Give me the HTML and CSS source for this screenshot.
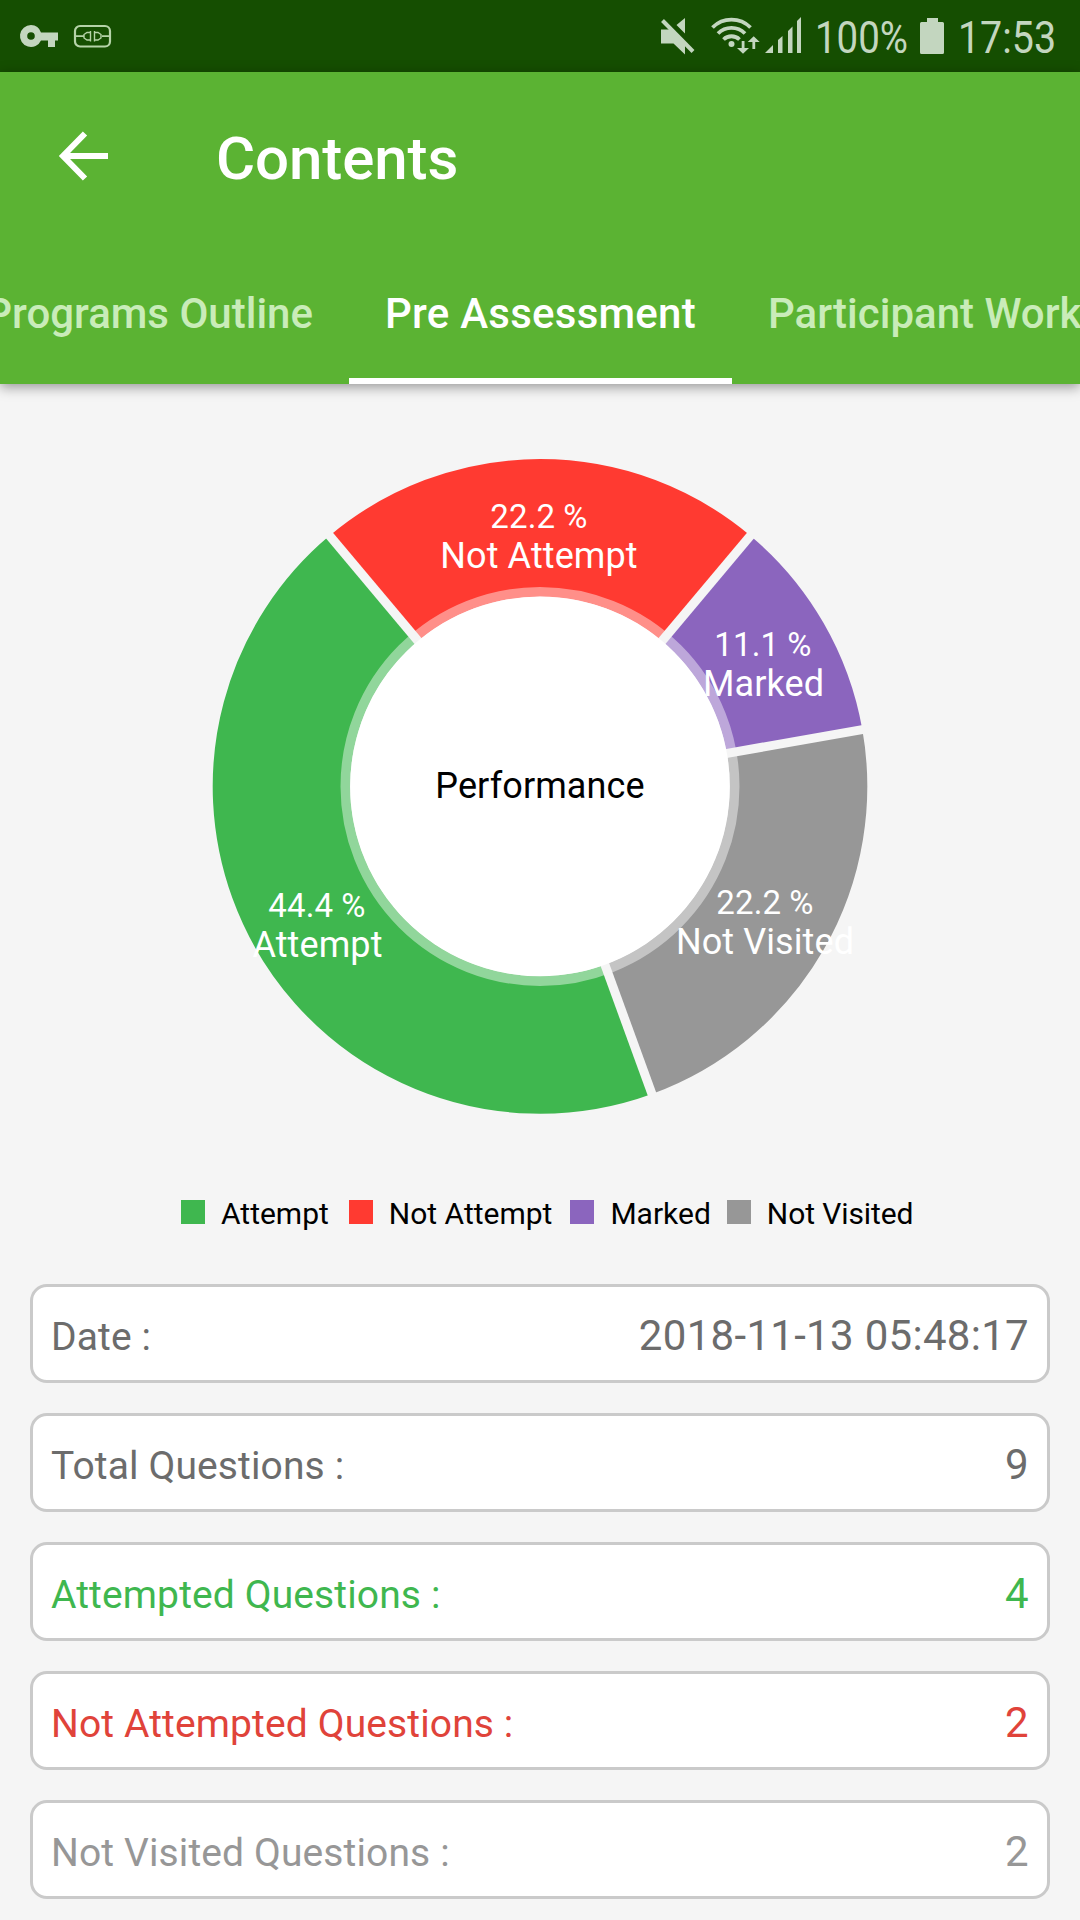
FILE: index.html
```html
<!DOCTYPE html>
<html lang="en">
<head>
    <meta charset="UTF-8">
    <meta name="viewport" content="width=device-width, initial-scale=1.0">
    <title>Contents</title>
    <link rel="stylesheet" href="styles.css">
</head>
<body>
    <div class="statusbar">
        <svg class="key" width="40" height="24" viewBox="0 0 40 24">
            <path fill-rule="evenodd" d="M11 0a11 11 0 1 0 10 15.500h7V22h7v-6.500h3V7.500H21A11 11 0 0 0 11 0zM11 7.200a3.800 3.800 0 1 1 0 7.600a3.800 3.800 0 0 1 0-7.600z"/>
        </svg>
        <svg class="vpn" width="38" height="24" viewBox="0 0 38 24">
            <rect x="1" y="1" width="35" height="20.500" rx="5" stroke-width="2.200"/>
            <path stroke-width="1.800" d="M2 11.200h8M28 11.200h8"/>
            <path stroke-width="1.400" d="M16.500 6v10.500M16 7.500h-3l-3 2v3.500l3 2h3M20.500 6v10.500M21 7.500h3l3 2v3.500l-3 2h-3"/>
        </svg>
        <div class="status-right">
            <svg class="mute" width="34" height="38" viewBox="0 0 34 38">
                <path d="M0 12.500h10L24 27v10.500L12.500 26.500H0zM24 1v15.500L15.500 8z"/>
                <path class="slash" d="M1.500 3.500L32 34.500"/>
            </svg>
            <svg class="wifi" width="50" height="38" viewBox="0 0 50 38">
                <path class="arc" d="M1.500 10.500a27 27 0 0 1 38 0M7 16.500a19 19 0 0 1 27 0M12.500 22.500a11.500 11.500 0 0 1 16 0"/>
                <circle cx="20.500" cy="27" r="3"/>
                <path d="M30.700 24h2.800v7h4.500l-6 5.700-6-5.700h4.700zM41.400 32h2.800v-7h4.500l-6-5.700-6 5.700h4.700z"/>
            </svg>
            <svg class="signal" width="37" height="37" viewBox="0 0 37 37">
                <path d="M0 36h8v-8zM13 36h4.500V19L13 23zM23 36h4.500V9.500L23 14zM32 36h4V0l-4 4z"/>
            </svg>
            <svg class="percent" width="94" height="72"><text x="0" y="53" textLength="93" lengthAdjust="spacingAndGlyphs">100%</text></svg>
            <svg class="battery" width="24" height="37" viewBox="0 0 24 37">
                <path d="M7 0h11v4h4.500q1.500 0 1.500 1.500v29q0 1.500-1.500 1.500h-21Q0 36 0 34.500v-29Q0 4 1.500 4H7z"/>
            </svg>
            <svg class="clock" width="100" height="72"><text x="0" y="53" textLength="98" lengthAdjust="spacingAndGlyphs">17:53</text></svg>
        </div>
    </div>
    <div class="header">
        <div class="toolbar">
            <svg class="back" width="50" height="50" viewBox="0 0 50 50">
                <path d="M49 25H5M26 2.500L4 25l22 22.500"/>
            </svg>
            <h1>Contents</h1>
        </div>
        <div class="tabs">
            <div class="tab first">Programs Outline</div>
            <div class="tab active">Pre Assessment</div>
            <div class="tab">Participant Workbook</div>
        </div>
    </div>
    <div class="chart">
        <svg width="1080" height="780" viewBox="0 384 1080 780">
            <g class="slices" transform="translate(540 786.400)">
                <circle class="attempt" r="258.500" pathLength="360" stroke-dasharray="160 200" transform="rotate(70)"/>
                <circle class="not-attempt" r="258.500" pathLength="360" stroke-dasharray="80 280" transform="rotate(-130)"/>
                <circle class="marked" r="258.500" pathLength="360" stroke-dasharray="40 320" transform="rotate(-50)"/>
                <circle class="not-visited" r="258.500" pathLength="360" stroke-dasharray="80 280" transform="rotate(-10)"/>
                <circle class="ring" r="194.500"/>
                <path class="gap" d="M0-180V-330" transform="rotate(-40)"/>
                <path class="gap" d="M0-180V-330" transform="rotate(40)"/>
                <path class="gap" d="M0-180V-330" transform="rotate(80)"/>
                <path class="gap" d="M0-180V-330" transform="rotate(160)"/>
                <circle class="hole" r="189.800"/>
            </g>
            <g class="labels">
                <text class="value" x="539" y="528">22.2 %</text>
                <text x="539" y="568">Not Attempt</text>
                <text class="value" x="763" y="656">11.1 %</text>
                <text x="763.500" y="696">Marked</text>
                <text class="value" x="317" y="917">44.4 %</text>
                <text x="317.500" y="957">Attempt</text>
                <text class="value" x="765" y="914">22.2 %</text>
                <text x="765" y="954">Not Visited</text>
                <text class="center" x="540" y="798">Performance</text>
            </g>
        </svg>
        <div class="legend">
            <div class="item attempt">Attempt</div>
            <div class="item not-attempt">Not Attempt</div>
            <div class="item marked">Marked</div>
            <div class="item not-visited">Not Visited</div>
        </div>
    </div>
    <div class="list">
        <div class="row"><span>Date :</span><b>2018-11-13 05:48:17</b></div>
        <div class="row"><span>Total Questions :</span><b>9</b></div>
        <div class="row green"><span>Attempted Questions :</span><b>4</b></div>
        <div class="row red"><span>Not Attempted Questions :</span><b>2</b></div>
        <div class="row gray"><span>Not Visited Questions :</span><b>2</b></div>
    </div>
</body>
</html>
```
FILE: styles.css
```css
* {
    margin: 0;
    padding: 0;
    box-sizing: border-box;
}
body {
    width: 1080px;
    height: 1920px;
    overflow: hidden;
    background: #f5f5f5;
    font-family: Roboto, sans-serif;
}
svg {
    display: block;
    flex: none;
    overflow: visible;
}

/* status bar */
.statusbar {
    display: flex;
    align-items: flex-start;
    height: 72px;
    background: #154e01;
    fill: #c3d6bf;
    stroke: none;
}
.key { margin: 25px 0 0 20px; }
.vpn {
    margin: 25px 0 0 14px;
    fill: none;
    stroke: #b5d3a8;
}
.status-right {
    display: flex;
    align-items: flex-start;
    margin-left: auto;
    padding-right: 22px;
}
.status-right text {
    font-size: 45px;
}
.mute { margin-top: 17px; }
.slash {
    stroke: #c3d6bf;
    stroke-width: 4;
}
.wifi { margin: 17px 0 0 16px; }
.arc {
    fill: none;
    stroke: #c3d6bf;
    stroke-width: 3.8;
}
.signal { margin: 17px 0 0 4px; }
.percent { margin-left: 13px; }
.battery { margin: 18px 0 0 11px; }
.clock { margin-left: 14px; }

/* app bar */
.header {
    height: 312px;
    background: #5bb333;
    color: white;
    box-shadow: 0 3px 12px rgba(0, 0, 0, 0.4);
}
.toolbar {
    display: flex;
    align-items: center;
    height: 168px;
    padding-left: 59px;
}
.back {
    fill: none;
    stroke: white;
    stroke-width: 6;
}
.toolbar h1 {
    margin-left: 107px;
    font-size: 60px;
    font-weight: 500;
    letter-spacing: -0.1px;
    padding-top: 4px;
}
.tabs {
    display: flex;
    height: 144px;
    overflow: hidden;
}
.tab {
    flex: none;
    padding: 49px 36px 0;
    font-size: 42px;
    line-height: 49px;
    font-weight: 500;
    white-space: nowrap;
    color: #c9ecb9;
}
.tab.first {
    width: 391px;
    margin-left: -42px;
    padding-left: 0;
    text-align: right;
}
.tab.active {
    width: 383px;
    color: white;
    letter-spacing: 0.25px;
    border-bottom: 6px solid white;
}

/* chart */
.slices circle {
    fill: none;
    stroke-width: 137.6;
}
.attempt { stroke: #3fb74f; }
.not-attempt { stroke: #ff3a31; }
.marked { stroke: #8b65be; }
.not-visited { stroke: #979797; }
.slices .ring {
    stroke: white;
    stroke-width: 10;
    stroke-opacity: 0.43;
}
.gap {
    stroke: #f5f5f5;
    stroke-width: 9;
}
.slices .hole {
    fill: white;
    stroke: none;
}
.labels {
    fill: white;
    font-size: 36px;
    letter-spacing: 0.1px;
    text-anchor: middle;
}
.labels .value { font-size: 33px; }
.labels .center { fill: black; }
.legend {
    display: flex;
    height: 120px;
    padding: 32px 0 0 181px;
    font-size: 30px;
    line-height: 35px;
    color: black;
}
.item {
    display: flex;
    margin-right: 20px;
}
.item::before {
    content: "";
    width: 24px;
    height: 24px;
    margin: 4px 16px 0 0;
}
.item.marked {
    margin-left: -2px;
    margin-right: 16px;
}
.item.not-visited { letter-spacing: -0.1px; }
.item.attempt::before { background: #3fb74f; }
.item.not-attempt::before { background: #ff3a31; }
.item.marked::before { background: #8b65be; }
.item.not-visited::before { background: #979797; }

/* result rows */
.list {
    display: flex;
    flex-direction: column;
    gap: 30px;
    padding: 0 30px;
}
.row {
    display: flex;
    justify-content: space-between;
    align-items: baseline;
    height: 99px;
    padding: 24px 18px 0;
    background: white;
    border: 3px solid #cacaca;
    border-radius: 17px;
    font-size: 39px;
    letter-spacing: 0.12px;
    color: #6c6c6c;
}
.row b {
    font-size: 42px;
    font-weight: 400;
    letter-spacing: 0.3px;
}
.green { color: #3fb74f; }
.red { color: #e0433a; }
.gray { color: #979797; }
```
